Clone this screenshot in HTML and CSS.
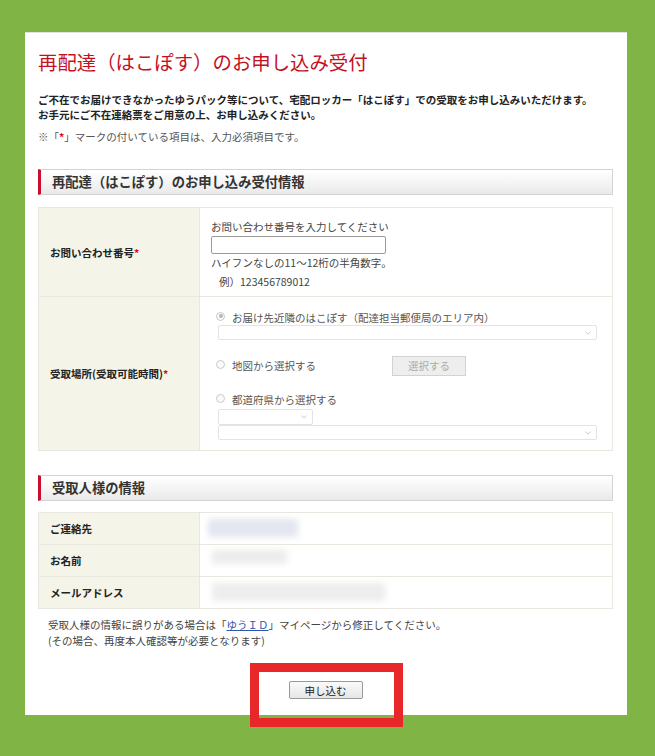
FILE: index.html
```html
<!DOCTYPE html>
<html lang="ja">
<head>
<meta charset="utf-8">
<title>再配達（はこぽす）のお申し込み受付</title>
<link rel="stylesheet" href="styles.css">
</head>
<body>
<div class="panel">
  <h1 class="title">再配達（はこぽす）のお申し込み受付</h1>
  <p class="lead">ご不在でお届けできなかったゆうパック等について、宅配ロッカー「はこぽす」での受取をお申し込みいただけます。<br>お手元にご不在連絡票をご用意の上、お申し込みください。</p>
  <p class="note">※「<span class="req">*</span>」マークの付いている項目は、入力必須項目です。</p>

  <h2 class="sec">再配達（はこぽす）のお申し込み受付情報</h2>
  <div class="form">
    <div class="row row1">
      <div class="lbl">お問い合わせ番号<span class="req">*</span></div>
      <div class="val">
        <div class="t">お問い合わせ番号を入力してください</div>
        <div class="input"></div>
        <div class="t">ハイフンなしの11〜12桁の半角数字。</div>
        <div class="t ex">例）123456789012</div>
      </div>
    </div>
    <div class="row row2">
      <div class="lbl">受取場所(受取可能時間)<span class="req">*</span></div>
      <div class="val val2">
        <div class="radio-line first"><span class="radio checked"></span><span>お届け先近隣のはこぽす（配達担当郵便局のエリア内）</span></div>
        <div class="select wide"><svg viewBox="0 0 8 5" class="chev"><path d="M0.5 0.5L4 4L7.5 0.5" fill="none" stroke="#aaa" stroke-width="0.8"/></svg></div>
        <div class="radio-line map"><span class="radio"></span><span class="maptxt">地図から選択する</span><span class="btn-sel">選択する</span></div>
        <div class="radio-line pref"><span class="radio"></span><span>都道府県から選択する</span></div>
        <div class="select small"><svg viewBox="0 0 8 5" class="chev"><path d="M0.5 0.5L4 4L7.5 0.5" fill="none" stroke="#aaa" stroke-width="0.8"/></svg></div>
        <div class="select wide w2"><svg viewBox="0 0 8 5" class="chev"><path d="M0.5 0.5L4 4L7.5 0.5" fill="none" stroke="#aaa" stroke-width="0.8"/></svg></div>
      </div>
    </div>
  </div>

  <h2 class="sec sec2">受取人様の情報</h2>
  <div class="form info">
    <div class="row irow">
      <div class="lbl">ご連絡先</div>
      <div class="val"><span class="blur b1"></span></div>
    </div>
    <div class="row irow">
      <div class="lbl">お名前</div>
      <div class="val"><span class="blur b2"></span></div>
    </div>
    <div class="row irow">
      <div class="lbl">メールアドレス</div>
      <div class="val"><span class="blur b3"></span></div>
    </div>
  </div>
  <p class="foot">受取人様の情報に誤りがある場合は「<a href="#" class="link">ゆうＩＤ</a>」マイページから修正してください。<br>(その場合、再度本人確認等が必要となります)</p>
  <div class="submit-wrap"><button class="submit" type="button">申し込む</button></div>
</div>
<div class="highlight"></div>
</body>
</html>
```

FILE: styles.css
```css
html, body {
  margin: 0;
  padding: 0;
}
body {
  background: #80b545;
  width: 655px;
  height: 756px;
  overflow: hidden;
  position: relative;
  font-family: "Noto Sans CJK JP", "Noto Sans", sans-serif;
  color: #222;
}
.panel {
  margin: 32px 0 0 25px;
  width: 602px;
  height: 683px;
  box-sizing: border-box;
  background: #fff;
  border-top: 1px solid #e2e2e2;
  padding: 16px 14px 0 13px;
}
.title {
  margin: 0;
  font-size: 19.4px;
  line-height: 25px;
  font-weight: normal;
  color: #c4111f;
}
.lead {
  margin: 18px 0 0;
  font-size: 10.5px;
  line-height: 15px;
  font-weight: bold;
  color: #222;
}
.note {
  margin: 7px 0 0;
  font-size: 10.5px;
  line-height: 15px;
  color: #555;
}
.req {
  color: #e60012;
  font-weight: bold;
}
.sec {
  margin: 25px 0 0;
  height: 26px;
  box-sizing: border-box;
  border: 1px solid #d3d3d3;
  border-left: 3px solid #c8102e;
  background: linear-gradient(#ffffff, #f4f4f4 55%, #e9e9e9);
  font-size: 13.3px;
  line-height: 24px;
  font-weight: bold;
  color: #333;
  padding-left: 11px;
}
.sec2 {
  margin-top: 24px;
}
.form {
  margin-top: 12px;
  border: 1px solid #e8e8e0;
}
.row {
  display: flex;
  border-top: 1px solid #e8e8e0;
}
.row:first-child {
  border-top: none;
}
.lbl {
  width: 161px;
  flex: none;
  background: #f5f4e9;
  border-right: 1px solid #e8e8e0;
  box-sizing: border-box;
  display: flex;
  align-items: center;
  padding-left: 11px;
  font-size: 10.5px;
  font-weight: bold;
  color: #222;
}
.val {
  flex: 1;
  font-size: 10.5px;
  color: #444;
}
.row1 {
  height: 88px;
}
.row1 .val {
  padding: 11px 0 0 11px;
}
.row1 .t {
  line-height: 16px;
}
.input {
  width: 175px;
  height: 18px;
  box-sizing: border-box;
  border: 1px solid #9a9a9a;
  border-radius: 2px;
  margin: 1px 0 1px;
}
.row1 .ex {
  margin: 3px 0 0 8px;
}
.row2 {
  height: 153px;
}
.val2 {
  padding: 14px 16px 0 16px;
  color: #555;
}
.radio-line {
  display: flex;
  align-items: center;
  height: 16px;
  line-height: 16px;
}
.radio-line.first {
  height: 14px;
}
.radio {
  width: 9px;
  height: 9px;
  box-sizing: border-box;
  border: 1px solid #c9c9c9;
  border-radius: 50%;
  background: #fafafa;
  margin-right: 7px;
  position: relative;
  top: -2px;
  flex: none;
}
.radio.checked::after {
  content: "";
  position: absolute;
  left: 1.5px;
  top: 1.5px;
  width: 4px;
  height: 4px;
  border-radius: 50%;
  background: #b5b5b5;
}
.select {
  height: 15px;
  box-sizing: border-box;
  border: 1px solid #e3e3e3;
  border-radius: 2px;
  background: #fff;
  margin-left: 2px;
  position: relative;
}
.select.wide {
  width: 379px;
}
.select.small {
  width: 95px;
  height: 16px;
  margin-top: 1px;
}
.chev {
  position: absolute;
  right: 5px;
  top: 5px;
  width: 6px;
  height: 4px;
}
.map {
  margin-top: 16px;
  height: 20px;
}
.maptxt {
  width: 160px;
}
.btn-sel {
  width: 74px;
  height: 20px;
  box-sizing: border-box;
  border: 1px solid #d2d2d2;
  background: #eeeeee;
  color: #aaa;
  text-align: center;
  line-height: 18px;
  font-size: 10.5px;
}
.pref {
  margin-top: 16px;
}
.info {
  margin-top: 11px;
}
.irow {
  height: 31px;
}
.irow .val {
  position: relative;
}
.blur {
  position: absolute;
  display: block;
  filter: blur(3px);
}
.b1 {
  left: 8px;
  top: 6px;
  width: 90px;
  height: 18px;
  background: #e3e6ef;
}
.b2 {
  left: 12px;
  top: 5px;
  width: 75px;
  height: 14px;
  background: #ececec;
}
.b3 {
  left: 12px;
  top: 6px;
  width: 173px;
  height: 18px;
  background: #ededed;
}
.foot {
  margin: 8px 0 0 10px;
  font-size: 10.5px;
  line-height: 16px;
  color: #444;
}
.link {
  color: #2a55b0;
  text-decoration: underline;
}
.submit-wrap {
  display: flex;
  justify-content: center;
  margin-top: 32px;
}
.submit {
  width: 74px;
  height: 18px;
  box-sizing: border-box;
  border: 1px solid #999;
  border-radius: 2px;
  background: linear-gradient(#fafafa, #e6e6e6);
  font-family: "Noto Sans CJK JP", sans-serif;
  font-size: 10.5px;
  line-height: 15px;
  padding: 0;
  color: #222;
}
.highlight {
  position: absolute;
  left: 250px;
  top: 663px;
  width: 153px;
  height: 64px;
  box-sizing: border-box;
  border: 9px solid #e8272b;
}
```
